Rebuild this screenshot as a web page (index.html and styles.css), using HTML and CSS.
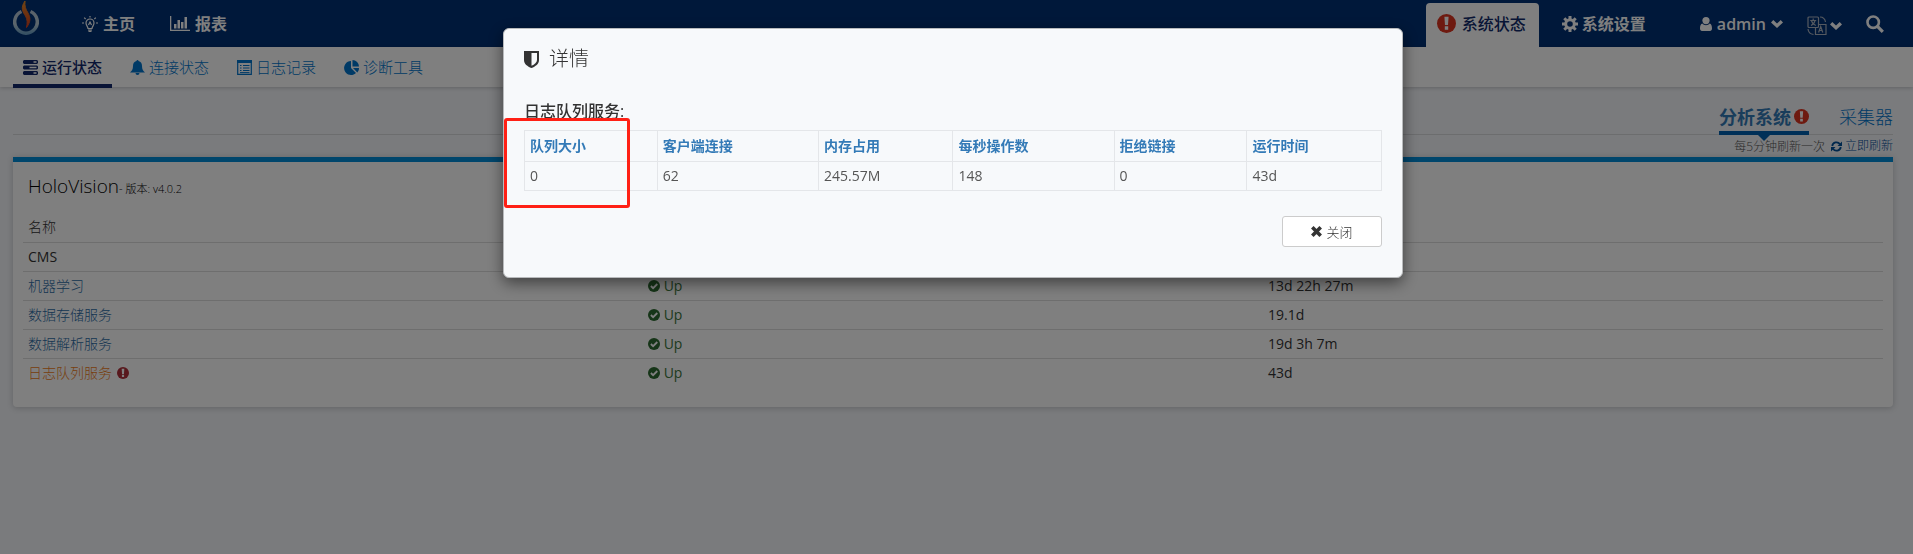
FILE: index.html
```html
<!DOCTYPE html>
<html lang="zh-CN">
<head>
<meta charset="utf-8">
<title>系统状态</title>
<link rel="stylesheet" href="styles.css">
</head>
<body>
<svg class="defs" aria-hidden="true">
  <symbol id="alert" viewBox="0 0 20 20"><circle cx="10" cy="10" r="10"/><path class="mark" d="M7.8 3h4.400l-.6 8.500H8.400zM8.200 13h3.600v3.600H8.200z"/></symbol>
  <symbol id="chevron" viewBox="0 0 12 8"><path d="M0 2.400 2.300 0 6 3.600 9.700 0 12 2.400 6 8z"/></symbol>
  <symbol id="check" viewBox="0 0 12 12"><circle cx="6" cy="6" r="6"/><path d="m2.900 6 2.200 2.200 4.200-4.200" fill="none" stroke="#fff" stroke-width="1.800"/></symbol>
</svg>
<header class="topbar">
  <a class="logo" href="#" aria-label="HoloVision">
    <svg viewBox="0 0 26 37" width="26" height="37">
      <defs>
        <linearGradient id="ring" x1="0" y1="0" x2="0" y2="1"><stop offset="0" stop-color="#b4c4d4"/><stop offset=".6" stop-color="#b8ccd8"/><stop offset="1" stop-color="#6fa3c8"/></linearGradient>
        <linearGradient id="flame" x1="0" y1="0" x2="0" y2="1"><stop offset="0" stop-color="#e08a28"/><stop offset="1" stop-color="#d83c1c"/></linearGradient>
      </defs>
      <path d="M8.500 11.500A11.300 11.300 0 1 0 17.500 11.500" fill="none" stroke="url(#ring)" stroke-width="3.500"/>
      <path d="M12 1C7 8 10 12 12.500 16c2 3.500 2 7 1 11.500 4.500-6 4-10 1.500-14.500C12.500 9 11.500 6 12 1z" fill="url(#flame)" stroke="url(#flame)"/>
    </svg>
  </a>
  <nav class="mainnav">
    <a href="#"><svg viewBox="0 0 16 16" width="16" height="16" fill="none" stroke="currentColor" stroke-width="1.200"><path d="M6 12.500C6 10.500 4 9.500 4 7a4 4 0 0 1 8 0c0 2.500-2 3.500-2 5.500zM6 14h4M6.500 15.400h3M8 0v1.500M0 7h2M14 7h2M2.200 1.600l1.400 1.400M13.800 1.600l-1.400 1.400M6.500 9 8 6l1.500 3"/></svg>主页</a>
    <a href="#"><svg viewBox="0 0 20 15" width="20" height="15" fill="currentColor"><path d="M0 0h1.300v13.700H20V15H0zM4 8h2.500v4.500H4zM7.500 4H10v8.500H7.500zM11 6h2.500v6.500H11zM14.500 1H17v11.500h-2.500z"/></svg>报表</a>
  </nav>
  <nav class="sysnav">
    <a class="systab" href="#"><svg class="alert" width="19" height="19"><use href="#alert"/></svg>系统状态</a>
    <a class="settings" href="#"><svg viewBox="0 0 16 16" width="16" height="16"><circle cx="8" cy="8" r="4.300" fill="none" stroke="currentColor" stroke-width="3"/><path d="M8 0v3M8 13v3M0 8h3M13 8h3M2.300 2.300l2.200 2.200M11.500 11.500l2.200 2.200M13.700 2.300l-2.200 2.200M4.500 11.500l-2.200 2.200" stroke="currentColor" stroke-width="3"/></svg>系统设置</a>
    <button class="user" type="button"><svg viewBox="0 0 12 14" width="12" height="14" fill="currentColor"><circle cx="6" cy="3.600" r="3.600"/><path d="M2.400 6.600C3.300 7.600 4.500 8.200 6 8.200s2.700-.6 3.600-1.600C11.400 7 12 9 12 11.500c0 1.600-.8 2.500-2 2.500H2c-1.200 0-2-.9-2-2.500C0 9 .6 7 2.400 6.600z"/></svg><span>admin</span><svg class="chev" width="12" height="8"><use href="#chevron"/></svg></button>
    <button class="lang" type="button" aria-label="语言"><svg viewBox="0 0 20 20" width="20" height="20" fill="none" stroke="#aab2c0" stroke-width="1.200"><rect x="1" y="1" width="10.500" height="10.500" rx="1"/><path d="M11.500 8.500H19v10H8.500v-7M6.200 2.500v1.800M3.200 4.500h6M4 9.500c2-1 3.600-3 4-5M4.500 5c.6 2 2 3.600 4.300 4.500M11.600 16.500l2.100-6 2.100 6M12.300 14.500h2.800M13 1c3 0 5 2 5.500 5M1 13c.3 3 2 5 5.500 5.500"/></svg><svg class="chev" width="12" height="8"><use href="#chevron"/></svg></button>
    <button class="search" type="button" aria-label="搜索"><svg viewBox="0 0 18 18" width="18" height="18" fill="none" stroke="currentColor" stroke-width="2.600"><circle cx="7.200" cy="7.200" r="5.700"/><path d="m11.200 11.200 5.600 5.600" stroke-width="3.200"/></svg></button>
  </nav>
</header>
<nav class="subnav">
  <a class="active" href="#"><svg viewBox="0 0 15 15" width="15" height="15"><path fill="currentColor" d="M1 0h13l1 1v2l-1 1H1L0 3V1zM1 5.500h13l1 1v2l-1 1H1l-1-1v-2zM1 11h13l1 1v2l-1 1H1l-1-1v-2z"/><path fill="#fff" d="M10.500 1.300h3v1.400h-3zM6.500 6.800h7v1.400h-7zM10.500 12.300h3v1.400h-3z"/></svg>运行状态</a>
  <a href="#"><svg viewBox="0 0 15 15" width="15" height="15" fill="currentColor"><path d="M6.500 1a1 1 0 0 1 2 0C11 1.600 12 3.500 12 6c0 3.500 1.200 5 3 6.500H0C1.800 11 3 9.500 3 6c0-2.500 1-4.400 3.500-5zM5.500 13h4a2 2 0 0 1-4 0z"/></svg>连接状态</a>
  <a href="#"><svg viewBox="0 0 15 15" width="15" height="15" fill="none" stroke="currentColor"><path d="M.7.700h13.600v13.600H.7z" stroke-width="1.200"/><path d="M0 1.500h15" stroke-width="3"/><path d="M3 5.500h1.500M3 8h1.500M3 10.500h1.500M6 5.500h6.500M6 8h6.500M6 10.500h6.500M3 12.600h9.500"/></svg>日志记录</a>
  <a href="#"><svg viewBox="0 0 15 15" width="15" height="15" fill="currentColor"><path d="M7 1v7l5 5A7 7 0 1 1 7 1zM8.500 0A6.500 6.500 0 0 1 15 6.500H8.500zM9 8h6c0 2-.6 3.300-1.700 4.500z"/></svg>诊断工具</a>
</nav>
<main class="page">
  <nav class="tabs">
    <a class="active" href="#">分析系统<svg class="alert" width="15" height="15"><use href="#alert"/></svg></a>
    <a href="#">采集器</a>
  </nav>
  <div class="refresh"><span>每5分钟刷新一次</span><a href="#"><svg viewBox="0 0 11 11" width="11" height="11" fill="none" stroke="currentColor" stroke-width="1.800"><path d="M1.200 5A4.300 4.300 0 0 1 9 3.200M9.800 6A4.300 4.300 0 0 1 2 7.800"/><path fill="currentColor" stroke="none" d="M11 .5V5H6.500zM0 10.500V6h4.500z"/></svg>立即刷新</a></div>
  <section class="card">
    <h1>HoloVision<small>- 版本: v4.0.2</small></h1>
    <table class="services">
      <thead><tr><th scope="col">名称</th><td></td><td></td></tr></thead>
      <tbody>
        <tr><td>CMS</td><td></td><td></td></tr>
        <tr><td><a href="#">机器学习</a></td><td class="up"><svg width="12" height="12"><use href="#check"/></svg> Up</td><td>13d 22h 27m</td></tr>
        <tr><td><a href="#">数据存储服务</a></td><td class="up"><svg width="12" height="12"><use href="#check"/></svg> Up</td><td>19.1d</td></tr>
        <tr><td><a href="#">数据解析服务</a></td><td class="up"><svg width="12" height="12"><use href="#check"/></svg> Up</td><td>19d 3h 7m</td></tr>
        <tr><td><a class="warn" href="#">日志队列服务</a> <svg class="error" width="12" height="12"><use href="#alert"/></svg></td><td class="up"><svg width="12" height="12"><use href="#check"/></svg> Up</td><td>43d</td></tr>
      </tbody>
    </table>
  </section>
</main>
<div class="backdrop">
  <div class="dialog" role="dialog" aria-modal="true" aria-labelledby="dialog-title">
    <h2 id="dialog-title"><svg viewBox="0 0 15 17" width="15" height="17"><path fill="currentColor" fill-rule="evenodd" d="M0 0h15v9c0 4-3.500 6.500-7.500 8C3.500 15.500 0 13 0 9zm7.500 2v12.800C10.500 13.500 13 11.500 13 9V2z"/></svg>详情</h2>
    <h3>日志队列服务:</h3>
    <table class="stats">
      <colgroup><col class="narrow"><col class="wide"><col class="medium"><col class="wide"><col class="narrow"><col></colgroup>
      <thead><tr><th scope="col">队列大小</th><th scope="col">客户端连接</th><th scope="col">内存占用</th><th scope="col">每秒操作数</th><th scope="col">拒绝链接</th><th scope="col">运行时间</th></tr></thead>
      <tbody><tr><td>0</td><td>62</td><td>245.57M</td><td>148</td><td>0</td><td>43d</td></tr></tbody>
    </table>
    <div class="actions"><button type="button"><svg viewBox="0 0 11 11" width="11" height="11" stroke="currentColor" stroke-width="3.600"><path d="m1.300 1.300 8.400 8.400M9.700 1.300 1.300 9.700"/></svg>关闭</button></div>
    <div class="marker"></div>
  </div>
</div>
</body>
</html>
```
FILE: styles.css
```css
* { box-sizing: border-box; }
body {
  margin: 0;
  min-height: 100vh;
  background: #f4f6fa;
  color: #333;
  font: 14px/20px "Open Sans", "Noto Sans CJK SC", sans-serif;
}
a { color: inherit; text-decoration: none; }
button { font: inherit; color: inherit; background: none; border: 0; padding: 0; cursor: pointer; }
svg { flex: none; }
h1, h2, h3 { margin: 0; font-weight: 400; }
.defs { position: absolute; width: 0; height: 0; }
.alert { fill: #dc3420; }
.mark { fill: #fff; }

.topbar {
  display: flex;
  height: 47px;
  padding: 0 29px 0 13px;
  background: #003074;
  color: #fff;
  font-size: 16px;
  font-weight: 700;
}
.logo { display: block; }
.logo svg { display: block; }
.mainnav, .sysnav { display: flex; align-items: center; }
.mainnav { gap: 35px; margin-left: 43px; }
.mainnav a { display: flex; align-items: center; gap: 5px; }
.sysnav { margin-left: auto; }
.systab {
  display: flex;
  align-items: center;
  align-self: flex-end;
  gap: 6px;
  height: 44px;
  padding: 0 13px 3px 11px;
  border-radius: 4px 4px 0 0;
  background: #fff;
  color: #102a6a;
  font-weight: 500;
}
.settings { display: flex; align-items: center; gap: 4px; margin: 0 54px 0 23px; }
.user { display: flex; align-items: center; gap: 5px; font-weight: 600; }
.lang { display: flex; align-items: center; gap: 3px; margin: 4px 24px 0; }
.chev { fill: #fff; }
.search svg { display: block; }

.subnav {
  display: flex;
  gap: 8px;
  height: 40px;
  padding-left: 13px;
  background: #fff;
  box-shadow: 0 1px 4px rgba(0, 0, 0, .2);
  color: #0074cc;
  font-size: 15px;
  font-weight: 300;
}
.subnav a { display: flex; align-items: center; gap: 4px; padding: 0 10px; }
.subnav .active {
  height: 41px;
  border-bottom: 4px solid #12296c;
  padding-top: 3px;
  color: #12296c;
  font-weight: 500;
}

.page { padding: 0 20px 0 13px; }
.tabs {
  display: flex;
  justify-content: flex-end;
  gap: 30px;
  height: 48px;
  border-bottom: 1px solid #d8dadd;
  color: #0074cc;
  font-size: 18px;
  font-weight: 300;
}
.tabs a { display: flex; align-items: center; gap: 3px; height: 48px; padding-top: 11px; }
.tabs .active {
  position: relative;
  border-bottom: 4px solid #0060b0;
  padding-top: 15px;
  color: #337ab7;
  font-weight: 700;
}
.tabs .active::after {
  content: "";
  position: absolute;
  top: 100%;
  left: 50%;
  margin: 4px 0 0 -6px;
  border: 6px solid transparent;
  border-top-color: #0060b0;
  border-bottom: 0;
}
.refresh {
  display: flex;
  justify-content: flex-end;
  gap: 6px;
  height: 22px;
  line-height: 24px;
  font-size: 12px;
  font-weight: 300;
  color: #555;
}
.refresh a { display: flex; align-items: center; gap: 3px; color: #00509a; }

.card {
  padding: 8px 10px 19px;
  border-top: 5px solid #008cd8;
  border-radius: 0 0 4px 4px;
  background: #fff;
  box-shadow: 0 1px 6px rgba(0, 0, 0, .2);
}
.card h1 { margin-bottom: 8px; padding-left: 5px; font-size: 19px; font-weight: 300; line-height: 32px; color: #000; }
.card small { font-size: 11px; font-weight: 300; }
.services { width: 100%; table-layout: fixed; border-collapse: collapse; }
.services th, .services td { height: 29px; padding: 0 5px; border-bottom: 1px solid #ddd; text-align: left; font-weight: 400; }
.services th { font-weight: 300; }
.services tbody tr:last-child td { border-bottom-color: transparent; }
.services a { color: #2c6ba4; font-weight: 300; }
.services a.warn { color: #f08020; }
.services svg { vertical-align: -1px; }
.services .error { fill: #b0303a; margin-left: 1px; }
.services .up { color: #3c763d; fill: #2c6a30; }

.backdrop {
  position: fixed;
  inset: 0;
  padding: 28px 7px 0 0;
  background: rgba(0, 0, 0, .5);
}
.dialog {
  position: relative;
  width: 900px;
  max-width: 100%;
  margin: 0 auto;
  padding: 15px 20px 30px;
  border: 1px solid #b8babc;
  border-radius: 6px;
  background: #f7f9fb;
  box-shadow: 0 5px 15px rgba(0, 0, 0, .5);
}
.dialog h2 { display: flex; align-items: center; gap: 10px; font-size: 20px; font-weight: 300; line-height: 30px; }
.dialog h3 { margin: 26px 0 8px; font-size: 16px; font-weight: 500; line-height: 22px; }
.stats { width: 100%; table-layout: fixed; border-collapse: collapse; }
.stats .narrow { width: 15.500%; }
.stats .medium { width: 15.700%; }
.stats .wide { width: 18.800%; }
.stats th, .stats td { padding: 0 5px; border: 1px solid #e4e6e9; text-align: left; }
.stats th { height: 31px; color: #337ab7; font-weight: 700; }
.stats td { height: 29px; color: #555; }
.actions { display: flex; justify-content: flex-end; margin-top: 25px; }
.actions button {
  display: flex;
  align-items: center;
  justify-content: center;
  gap: 4px;
  width: 100px;
  height: 31px;
  border: 1px solid #ccc;
  border-radius: 3px;
  background: #fff;
  font-size: 13px;
  font-weight: 300;
}
.marker {
  position: absolute;
  left: 0;
  top: 89px;
  width: 126px;
  height: 90px;
  border: 3px solid #ff2015;
  border-radius: 3px;
}
```
